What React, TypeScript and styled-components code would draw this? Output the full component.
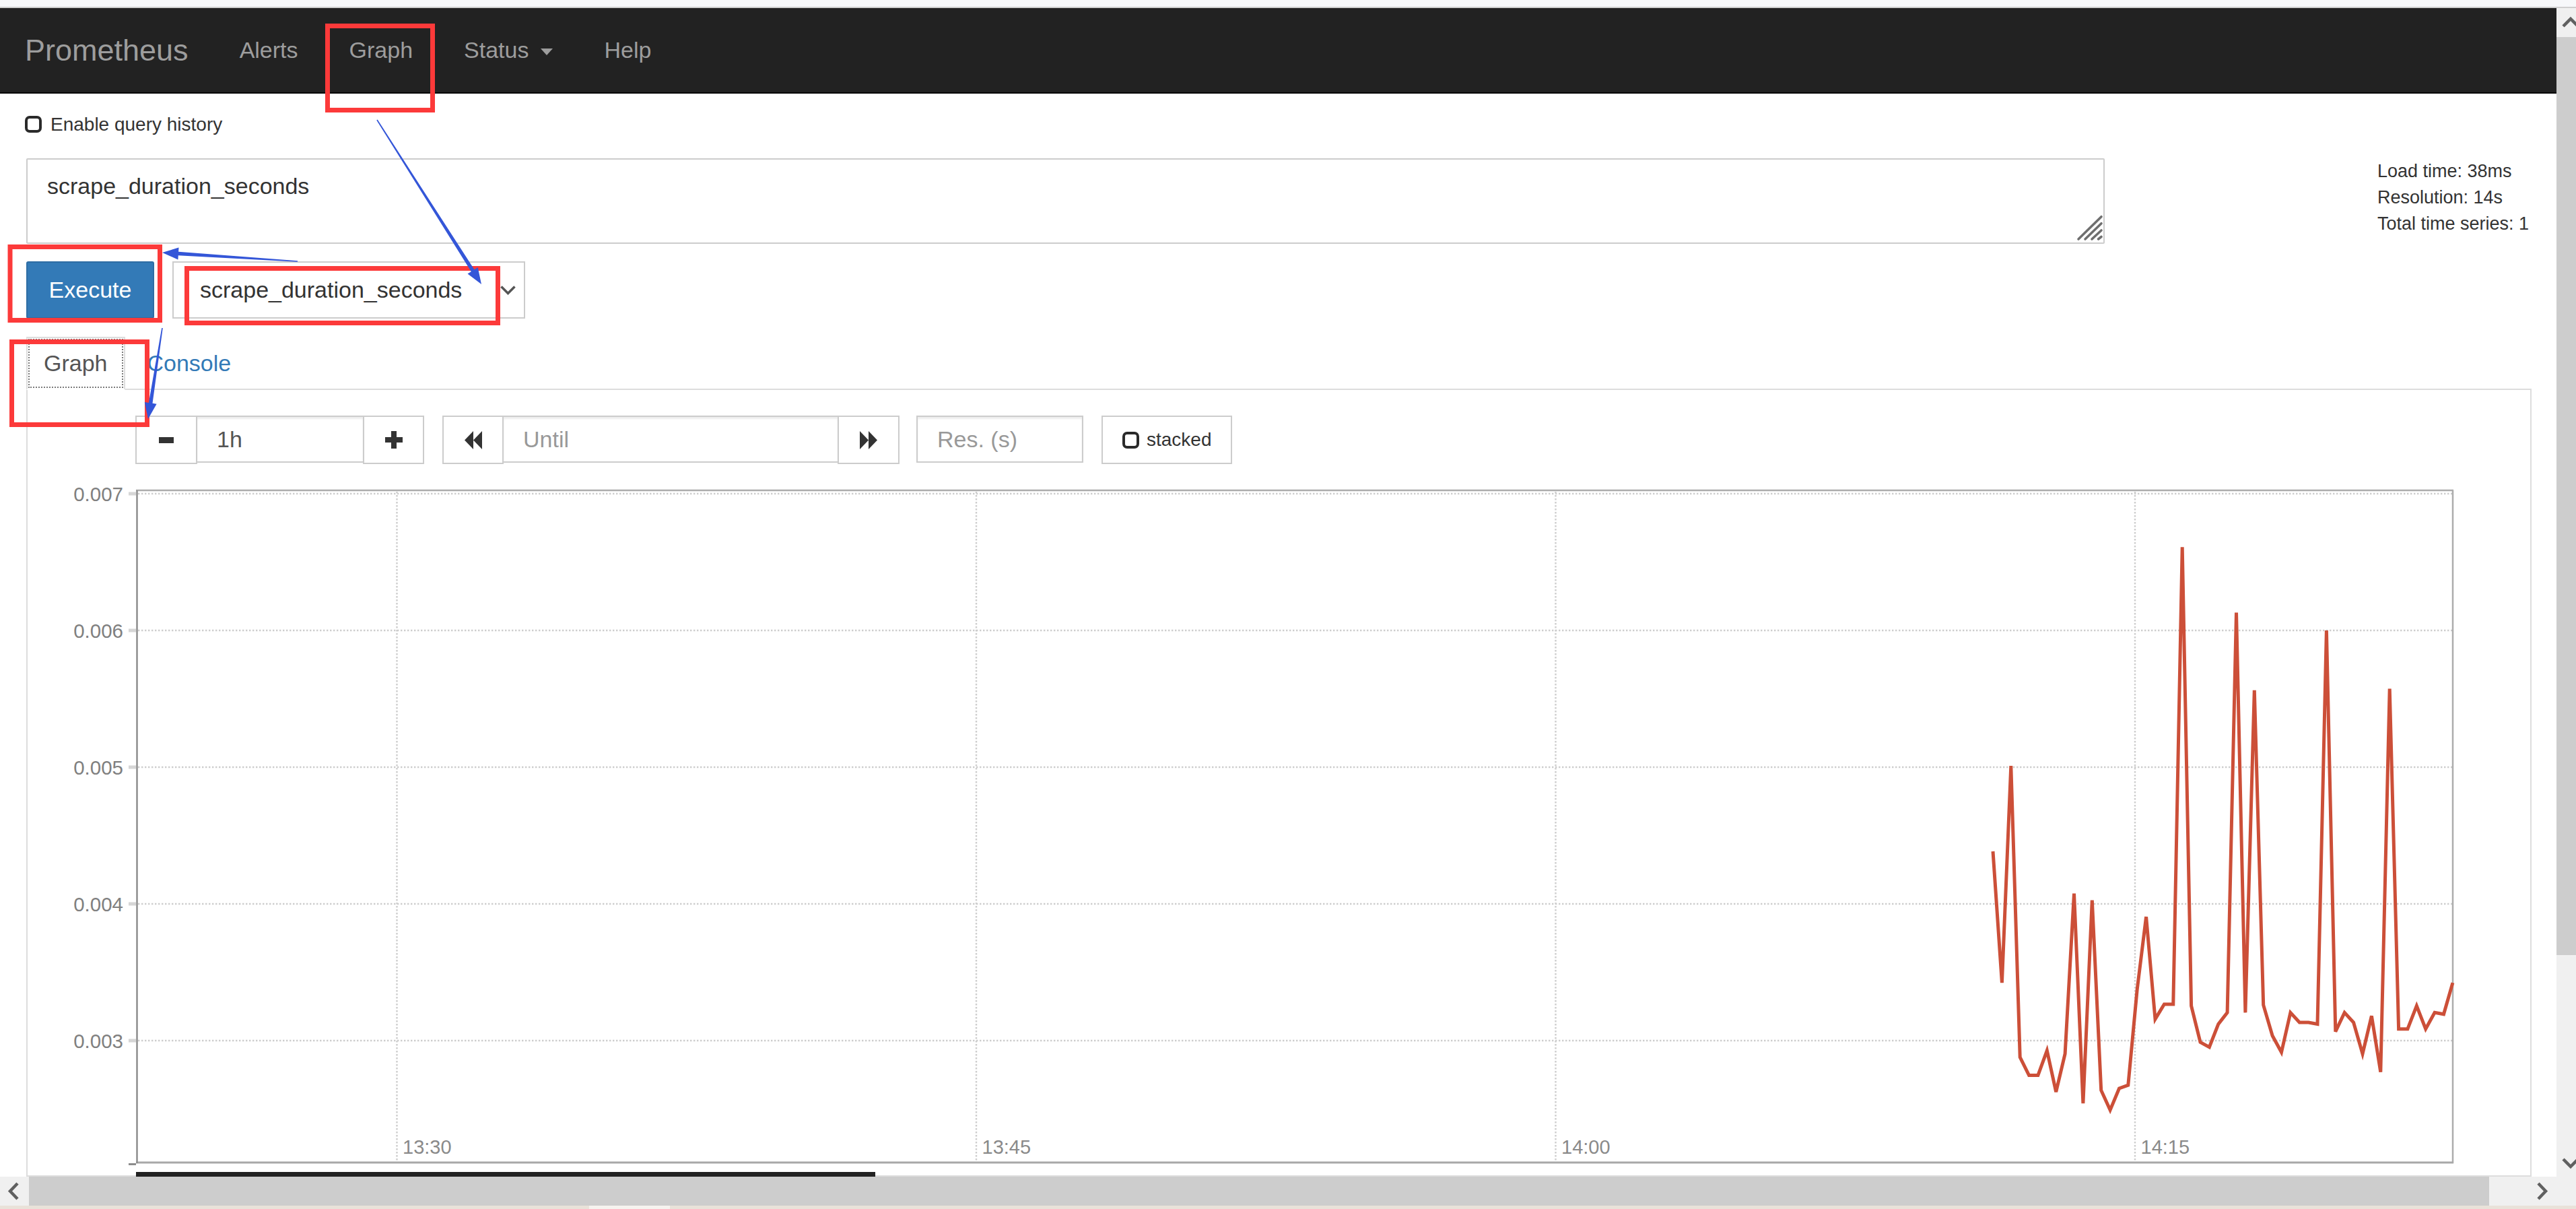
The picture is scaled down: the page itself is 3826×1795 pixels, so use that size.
import React from "react";
import styled, { createGlobalStyle } from "styled-components";

const GlobalStyle = createGlobalStyle`
  html, body {
    margin: 0;
    padding: 0;
    width: 3826px;
    height: 1795px;
    overflow: hidden;
    background: #ffffff;
  }
  body {
    font-family: "Liberation Sans", Arial, Helvetica, sans-serif;
    color: #333333;
  }
  *, *::before, *::after { box-sizing: border-box; }
`;

const FONT = `"Liberation Sans", Arial, Helvetica, sans-serif`;

/* ---------- window frame ---------- */

const Root = styled.div`
  position: relative;
  width: 3826px;
  height: 1795px;
  display: flex;
  flex-direction: column;
  overflow: hidden;
`;

const TopStrip = styled.div`
  flex: none;
  height: 12px;
  background: #f7f8fa;
  border-bottom: 2px solid #cfcfcf;
`;

const MainRow = styled.div`
  flex: 1;
  min-height: 0;
  display: flex;
`;

const Viewport = styled.div`
  flex: none;
  width: 3797px;
  display: flex;
  flex-direction: column;
`;

const Page = styled.div`
  flex: 1;
  min-height: 0;
  overflow: hidden;
  display: flex;
  flex-direction: column;
  background: #ffffff;
`;

const HScroll = styled.div`
  flex: none;
  height: 43px;
  display: flex;
  background: #f0f0f0;
`;

const ScrollButton = styled.div`
  flex: none;
  width: 43px;
  height: ${(p: { $h?: number }) => p.$h ?? 43}px;
  display: flex;
  align-items: center;
  justify-content: center;
  background: #f0f0f0;
`;

const HThumb = styled.div`
  flex: none;
  width: 3654px;
  background: #cdcdcd;
`;

const Fill = styled.div`
  flex: 1;
`;

const VScroll = styled.div`
  flex: none;
  width: 29px;
  display: flex;
  flex-direction: column;
  overflow: hidden;
  background: #f0f0f0;
`;

const VThumb = styled.div`
  flex: none;
  width: 43px;
  height: 1363px;
  background: #cdcdcd;
`;

const BottomStrip = styled.div`
  flex: none;
  height: 5px;
  background: #e9e2d9;
  display: flex;
`;

const StripLight = styled.div`
  margin-left: 875px;
  width: 120px;
  background: #f6f3ef;
`;

/* ---------- navbar ---------- */

const Navbar = styled.nav`
  flex: none;
  height: 127px;
  background: #222222;
  border-bottom: 2px solid #080808;
  display: flex;
  align-items: center;
  padding-left: 37px;
`;

const Brand = styled.span`
  font-size: 45px;
  color: #9d9d9d;
  padding-right: 38px;
`;

const NavLink = styled.span`
  font-size: 34px;
  color: #9d9d9d;
  padding: 0 38px;
  display: flex;
  align-items: center;
`;

const Caret = styled.span`
  display: inline-block;
  width: 0;
  height: 0;
  margin-left: 18px;
  margin-top: 4px;
  border-top: 10px solid #9d9d9d;
  border-left: 9px solid transparent;
  border-right: 9px solid transparent;
`;

/* ---------- content ---------- */

const Content = styled.div`
  flex: 1;
  min-height: 0;
  display: flex;
  flex-direction: column;
  padding: 0 37px 0 39px;
`;

const HistoryRow = styled.label`
  flex: none;
  margin-top: 33px;
  height: 25px;
  display: flex;
  align-items: center;
  gap: 13px;
  font-size: 28px;
  color: #333333;
`;

const Check = styled.span`
  flex: none;
  display: inline-block;
  width: 25px;
  height: 25px;
  margin-left: ${(p: { $ml?: number }) => p.$ml ?? 0}px;
  border: 4px solid #2a2a2a;
  border-radius: 7px;
  background: #ffffff;
`;

const QueryRow = styled.div`
  flex: none;
  margin-top: 38px;
  display: grid;
  grid-template-columns: 3087px 1fr;
  column-gap: 405px;
  align-items: start;
`;

const TextareaWrap = styled.div`
  position: relative;
  height: 127px;
`;

const Expr = styled.textarea`
  display: block;
  width: 100%;
  height: 100%;
  margin: 0;
  resize: none;
  border: 2.5px solid #cccccc;
  border-radius: 2px;
  padding: 15px 29px;
  font-family: ${FONT};
  font-size: 34px;
  line-height: 48px;
  color: #333333;
  background: #ffffff;
  outline: none;
`;

const Grip = styled.svg`
  position: absolute;
  right: 2px;
  bottom: 3px;
  width: 40px;
  height: 40px;
`;

const Stats = styled.div`
  font-size: 27px;
  line-height: 39px;
  color: #333333;
  white-space: nowrap;
`;

const ExecRow = styled.div`
  flex: none;
  margin-top: 26px;
  height: 85px;
  display: flex;
  gap: 27px;
`;

const ExecuteButton = styled.button`
  flex: none;
  width: 190px;
  margin: 0;
  padding: 0;
  background: #337ab7;
  border: 2.5px solid #2e6da4;
  border-radius: 3px;
  color: #ffffff;
  font-family: ${FONT};
  font-size: 34px;
`;

const MetricSelect = styled.div`
  flex: none;
  width: 524px;
  display: flex;
  align-items: center;
  justify-content: space-between;
  padding: 0 12px 0 39px;
  border: 2.5px solid #cccccc;
  background: #ffffff;
  font-size: 34px;
  color: #333333;
`;

const TabsBar = styled.div`
  flex: none;
  margin-top: 27px;
  display: flex;
  align-items: flex-end;
  border-bottom: 2px solid #dddddd;
`;

const ActiveTab = styled.div`
  margin-bottom: -2px;
  padding: 13px 24px;
  line-height: 49px;
  font-size: 34px;
  border: 2px solid #dddddd;
  border-bottom-color: transparent;
  background: #ffffff;
  color: #555555;
  outline: 2px dotted #7a7a7a;
  outline-offset: -5px;
`;

const LinkTab = styled.div`
  margin-left: 7px;
  padding: 13px 24px 13px 26px;
  line-height: 49px;
  font-size: 34px;
  color: #337ab7;
`;

const Pane = styled.div`
  flex: 1;
  min-height: 0;
  border: 2px solid #dddddd;
  border-top: none;
  padding-top: 38px;
`;

const Controls = styled.div`
  display: flex;
  align-items: flex-start;
  gap: 27px;
  height: 72px;
  padding-left: 160px;
`;

const Group = styled.div`
  display: flex;
  align-items: flex-start;
`;

const CtlButton = styled.div<{ $w: number }>`
  flex: none;
  width: ${(p) => p.$w}px;
  height: 72px;
  display: flex;
  align-items: center;
  justify-content: center;
  border: 2px solid #cccccc;
  background: #ffffff;
  margin-left: -2px;
  &:first-child { margin-left: 0; }
`;

const CtlInput = styled.input<{ $w: number }>`
  flex: none;
  width: ${(p) => p.$w}px;
  height: 70px;
  margin: 0 0 0 -2px;
  padding: 0 29px;
  border: 2px solid #cccccc;
  border-radius: 0;
  box-shadow: inset 0 3px 3px rgba(0, 0, 0, 0.075);
  font-family: ${FONT};
  font-size: 34px;
  color: #555555;
  background: #ffffff;
  outline: none;
  &:first-child { margin-left: 0; }
  &::placeholder { color: #999999; }
`;

const StackedButton = styled.div`
  flex: none;
  width: 194px;
  height: 72px;
  display: flex;
  align-items: center;
  gap: 11px;
  padding-left: 29px;
  border: 2px solid #cccccc;
  background: #ffffff;
  font-size: 28px;
  color: #333333;
`;

const ChartSvg = styled.svg`
  display: block;
  margin-top: 31px;
`;

const RangeBar = styled.div`
  margin-top: 5px;
  margin-left: 161px;
  width: 1098px;
  height: 40px;
  background: #222222;
`;

const Overlay = styled.svg`
  position: absolute;
  left: 0;
  top: 0;
  width: 3826px;
  height: 1795px;
  pointer-events: none;
`;

/* ---------- data ---------- */

const SERIES = [
  0.004384, 0.003423, 0.00501, 0.002879, 0.002746, 0.002746, 0.002927, 0.002625,
  0.002903, 0.004076, 0.002541, 0.004027, 0.002637, 0.002492, 0.00265, 0.002674,
  0.003375, 0.003906, 0.003157, 0.003266, 0.003266, 0.00661, 0.003254, 0.002988,
  0.002952, 0.003121, 0.003205, 0.00613, 0.003205, 0.005562, 0.00326, 0.003036,
  0.002915, 0.003205, 0.003133, 0.003133, 0.003121, 0.006, 0.003066, 0.003205,
  0.003133, 0.002903, 0.003181, 0.00277, 0.005574, 0.003085, 0.003085, 0.003254,
  0.003085, 0.003205, 0.003193, 0.003423,
];

const Y_TICKS = [
  { label: "0.007", v: 0.007 },
  { label: "0.006", v: 0.006 },
  { label: "0.005", v: 0.005 },
  { label: "0.004", v: 0.004 },
  { label: "0.003", v: 0.003 },
];

const X_TICKS = [
  { label: "13:30", x: 589.5 },
  { label: "13:45", x: 1450 },
  { label: "14:00", x: 2310.5 },
  { label: "14:15", x: 3171 },
];

const PLOT = { left: 202, top: 728, right: 3644, bottom: 1727 };
const yOf = (v: number) => 733 + (0.007 - v) * 203000;
const SERIES_X0 = 2960;
const SERIES_STEP = 13.39;

const RED_BOXES = [
  { x: 486.5, y: 38.5, w: 156, h: 125 },
  { x: 15, y: 366.5, w: 222.5, h: 109 },
  { x: 277.5, y: 398.5, w: 462, h: 81 },
  { x: 17.5, y: 507.5, w: 201, h: 123 },
];

const ARROWS = [
  { sx: 560, sy: 178, tx: 715, ty: 422 },
  { sx: 442, sy: 388, tx: 241, ty: 375 },
  { sx: 241, sy: 487, tx: 220, ty: 622 },
];

function arrowPolygon(sx: number, sy: number, tx: number, ty: number): string {
  const dx = tx - sx;
  const dy = ty - sy;
  const len = Math.hypot(dx, dy);
  const ux = dx / len;
  const uy = dy / len;
  const nx = -uy;
  const ny = ux;
  const head = 24;
  const hw = 9;
  const w0 = 0.8;
  const w1 = 2.8;
  const bx = tx - ux * head;
  const by = ty - uy * head;
  const pts = [
    [sx + nx * w0, sy + ny * w0],
    [bx + nx * w1, by + ny * w1],
    [bx + nx * hw, by + ny * hw],
    [tx, ty],
    [bx - nx * hw, by - ny * hw],
    [bx - nx * w1, by - ny * w1],
    [sx - nx * w0, sy - ny * w0],
  ];
  return pts.map((p) => `${p[0].toFixed(1)},${p[1].toFixed(1)}`).join(" ");
}

/* ---------- small drawings ---------- */

const Chevron = ({ dir, size = 43 }: { dir: "up" | "down" | "left" | "right"; size?: number }) => {
  const pts: Record<string, string> = {
    up: "10,27 21,16 32,27",
    down: "10,16 21,27 32,16",
    left: "26,10 15,21.5 26,33",
    right: "16,10 27,21.5 16,33",
  };
  return (
    <svg width={size} height={size} viewBox="0 0 43 43">
      <polyline points={pts[dir]} fill="none" stroke="#606060" strokeWidth={4.5} />
    </svg>
  );
};

const MinusIcon = () => (
  <svg width="22" height="9" viewBox="0 0 22 9">
    <rect x="0" y="0" width="22" height="9" fill="#333" />
  </svg>
);

const PlusIcon = () => (
  <svg width="26" height="26" viewBox="0 0 26 26">
    <rect x="0" y="9" width="26" height="8" fill="#333" />
    <rect x="9" y="0" width="8" height="26" fill="#333" />
  </svg>
);

const BackwardIcon = () => (
  <svg width="26" height="27" viewBox="0 0 26 27">
    <polygon points="13,0 0,13.5 13,27" fill="#333" />
    <polygon points="26,0 13,13.5 26,27" fill="#333" />
  </svg>
);

const ForwardIcon = () => (
  <svg width="26" height="27" viewBox="0 0 26 27">
    <polygon points="0,0 13,13.5 0,27" fill="#333" />
    <polygon points="13,0 26,13.5 13,27" fill="#333" />
  </svg>
);

/* ---------- chart ---------- */

const Chart = () => {
  const line = SERIES.map((v, i) => `${(SERIES_X0 + i * SERIES_STEP).toFixed(1)},${yOf(v).toFixed(1)}`).join(" ");
  const grid = { stroke: "#cdcdcd", strokeWidth: 2.4, strokeDasharray: "2.4 2.6" };
  return (
    <ChartSvg width={3609} height={1015} viewBox="41 720 3609 1015">
      {Y_TICKS.map((t) => (
        <line key={`gy${t.label}`} x1={PLOT.left + 3} x2={PLOT.right - 2} y1={yOf(t.v)} y2={yOf(t.v)} {...grid} />
      ))}
      {X_TICKS.map((t) => (
        <line key={`gx${t.label}`} x1={t.x} x2={t.x} y1={PLOT.top + 2} y2={PLOT.bottom - 2} {...grid} />
      ))}
      <line x1={PLOT.left} x2={PLOT.right} y1={PLOT.top} y2={PLOT.top} stroke="#acacac" strokeWidth={2.5} />
      <line x1={PLOT.right - 1} x2={PLOT.right - 1} y1={PLOT.top} y2={PLOT.bottom} stroke="#acacac" strokeWidth={2.5} />
      <line x1={PLOT.left} x2={PLOT.right} y1={PLOT.bottom - 1} y2={PLOT.bottom - 1} stroke="#a8a8a8" strokeWidth={3} />
      <line x1={PLOT.left + 1.5} x2={PLOT.left + 1.5} y1={PLOT.top} y2={PLOT.bottom} stroke="#8c8c8c" strokeWidth={2.5} />
      {Y_TICKS.map((t) => (
        <rect key={`ty${t.label}`} x={191} y={yOf(t.v) - 2.5} width={11} height={5} fill="#d6d6d6" />
      ))}
      <rect x={191} y={PLOT.bottom} width={11} height={3} fill="#8c8c8c" />
      {Y_TICKS.map((t) => (
        <text
          key={`ly${t.label}`}
          x={183}
          y={yOf(t.v) + 10.5}
          textAnchor="end"
          fontFamily={FONT}
          fontSize={29.5}
          fill="#808080"
        >
          {t.label}
        </text>
      ))}
      {X_TICKS.map((t) => (
        <text key={`lx${t.label}`} x={t.x + 8.5} y={1713} fontFamily={FONT} fontSize={29} fill="#8a8a8a">
          {t.label}
        </text>
      ))}
      <polyline points={line} fill="none" stroke="#cc4f38" strokeWidth={5} strokeLinejoin="miter" />
    </ChartSvg>
  );
};

/* ---------- app ---------- */

export default function App() {
  return (
    <>
      <GlobalStyle />
      <Root>
        <TopStrip />
        <MainRow>
          <Viewport>
            <Page>
              <Navbar>
                <Brand>Prometheus</Brand>
                <NavLink>Alerts</NavLink>
                <NavLink>Graph</NavLink>
                <NavLink>
                  Status
                  <Caret />
                </NavLink>
                <NavLink>Help</NavLink>
              </Navbar>
              <Content>
                <HistoryRow>
                  <Check $ml={-2} />
                  Enable query history
                </HistoryRow>
                <QueryRow>
                  <TextareaWrap>
                    <Expr defaultValue="scrape_duration_seconds" spellCheck={false} />
                    <Grip viewBox="0 0 40 40">
                      <g stroke="#6f6f6f" strokeWidth={3.6} strokeLinecap="round">
                        <line x1="3" y1="36" x2="37" y2="2.7" />
                        <line x1="13" y1="36" x2="37" y2="12.7" />
                        <line x1="23" y1="36" x2="37" y2="23" />
                        <line x1="32.5" y1="36" x2="37" y2="32.5" />
                      </g>
                    </Grip>
                  </TextareaWrap>
                  <Stats>
                    <div>Load time: 38ms</div>
                    <div>Resolution: 14s</div>
                    <div>Total time series: 1</div>
                  </Stats>
                </QueryRow>
                <ExecRow>
                  <ExecuteButton>Execute</ExecuteButton>
                  <MetricSelect>
                    <span>scrape_duration_seconds</span>
                    <svg width="23" height="14" viewBox="0 0 23 14">
                      <polyline points="1.5,1.5 11.5,11.5 21.5,1.5" fill="none" stroke="#555" strokeWidth={3.5} />
                    </svg>
                  </MetricSelect>
                </ExecRow>
                <TabsBar>
                  <ActiveTab>Graph</ActiveTab>
                  <LinkTab>Console</LinkTab>
                </TabsBar>
                <Pane>
                  <Controls>
                    <Group>
                      <CtlButton $w={92}>
                        <MinusIcon />
                      </CtlButton>
                      <CtlInput $w={250} defaultValue="1h" />
                      <CtlButton $w={91}>
                        <PlusIcon />
                      </CtlButton>
                    </Group>
                    <Group>
                      <CtlButton $w={91}>
                        <BackwardIcon />
                      </CtlButton>
                      <CtlInput $w={500} placeholder="Until" />
                      <CtlButton $w={92}>
                        <ForwardIcon />
                      </CtlButton>
                    </Group>
                    <CtlInput $w={248} placeholder="Res. (s)" />
                    <StackedButton>
                      <Check />
                      stacked
                    </StackedButton>
                  </Controls>
                  <Chart />
                  <RangeBar />
                </Pane>
              </Content>
            </Page>
            <HScroll>
              <ScrollButton>
                <Chevron dir="left" />
              </ScrollButton>
              <HThumb />
              <Fill />
              <ScrollButton>
                <Chevron dir="right" />
              </ScrollButton>
            </HScroll>
          </Viewport>
          <VScroll>
            <ScrollButton>
              <Chevron dir="up" />
            </ScrollButton>
            <VThumb />
            <Fill />
            <ScrollButton $h={42}>
              <Chevron dir="down" />
            </ScrollButton>
            <ScrollButton />
          </VScroll>
        </MainRow>
        <BottomStrip>
          <StripLight />
        </BottomStrip>
        <Overlay viewBox="0 0 3826 1795">
          {RED_BOXES.map((b, i) => (
            <rect key={i} x={b.x} y={b.y} width={b.w} height={b.h} fill="none" stroke="#fc3a3a" strokeWidth={7} />
          ))}
          {ARROWS.map((a, i) => (
            <polygon key={i} points={arrowPolygon(a.sx, a.sy, a.tx, a.ty)} fill="#3456d8" />
          ))}
        </Overlay>
      </Root>
    </>
  );
}
